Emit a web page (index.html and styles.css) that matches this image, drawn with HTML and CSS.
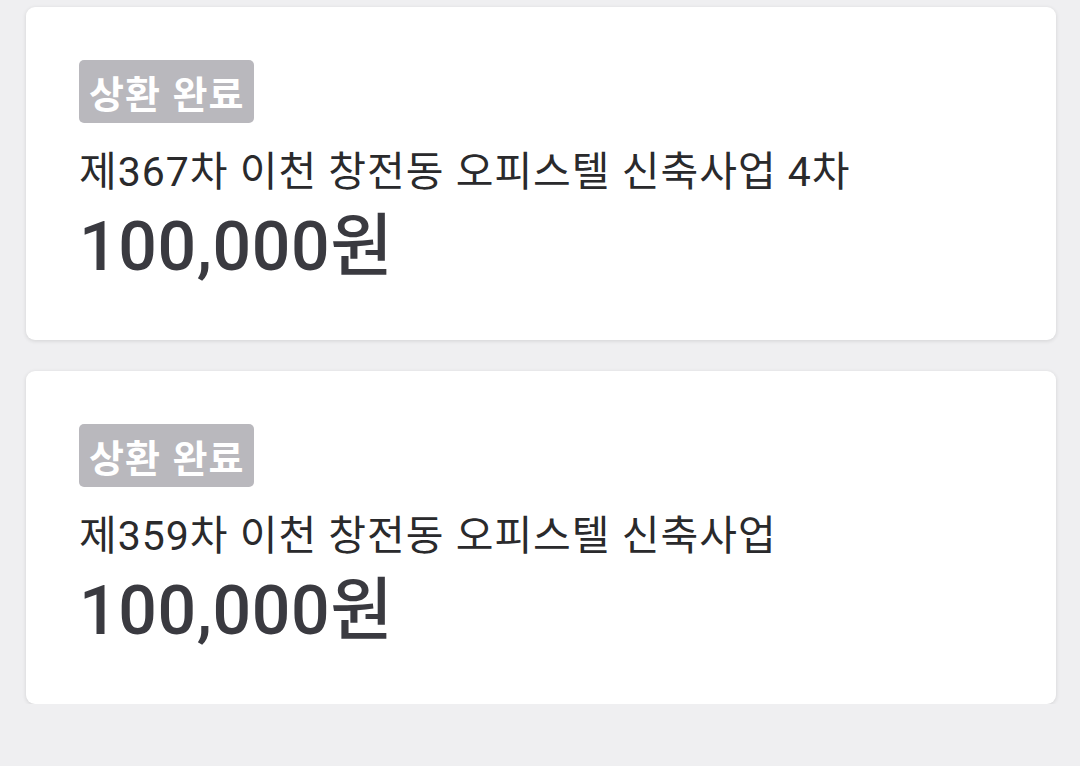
FILE: index.html
```html
<!DOCTYPE html>
<html lang="ko">
<head>
    <meta charset="UTF-8">
    <meta name="viewport" content="width=device-width, initial-scale=1.0">
    <title>투자 내역</title>
    <link rel="stylesheet" href="styles.css">
</head>
<body>

    <!-- Repaid list -->
    <div class="list">
        <div class="card">
            <span class="badge">상환 완료</span>
            <div class="title">제367차 이천 창전동 오피스텔 신축사업 4차</div>
            <div class="amount">100,000원</div>
        </div>
        <div class="card">
            <span class="badge">상환 완료</span>
            <div class="title">제359차 이천 창전동 오피스텔 신축사업</div>
            <div class="amount">100,000원</div>
        </div>
    </div>

</body>
</html>
```

FILE: styles.css
```css
body {
    font-family: Roboto, "Noto Sans CJK KR", sans-serif;
    background-color: #efeff1;
    margin: 0;
    padding: 0;
}
/* List */
.list {
    display: flex;
    flex-direction: column;
    gap: 31px;
    padding: 7px 24px 0 26px;
}
.card {
    background: white;
    border-radius: 9px;
    box-shadow: 0px 1px 4px rgba(0, 0, 0, 0.12);
    height: 333px;
    box-sizing: border-box;
    padding: 53px 53px 0;
    display: flex;
    flex-direction: column;
    align-items: flex-start;
}
/* Status badge */
.badge {
    background: #b9b8bd;
    color: white;
    font-family: "Noto Sans CJK KR", sans-serif;
    font-weight: bold;
    font-size: 38px;
    letter-spacing: 1px;
    line-height: 63px;
    height: 63px;
    padding: 0 10px 0 10px;
    border-radius: 5px;
}
.title {
    margin-top: 23px;
    font-size: 41px;
    letter-spacing: 1px;
    line-height: 52px;
    color: #2a2a2c;
}
.amount {
    margin-top: 10px;
    font-size: 68px;
    font-weight: 500;
    letter-spacing: 0.6px;
    line-height: 78px;
    color: #3a3a40;
}
```
